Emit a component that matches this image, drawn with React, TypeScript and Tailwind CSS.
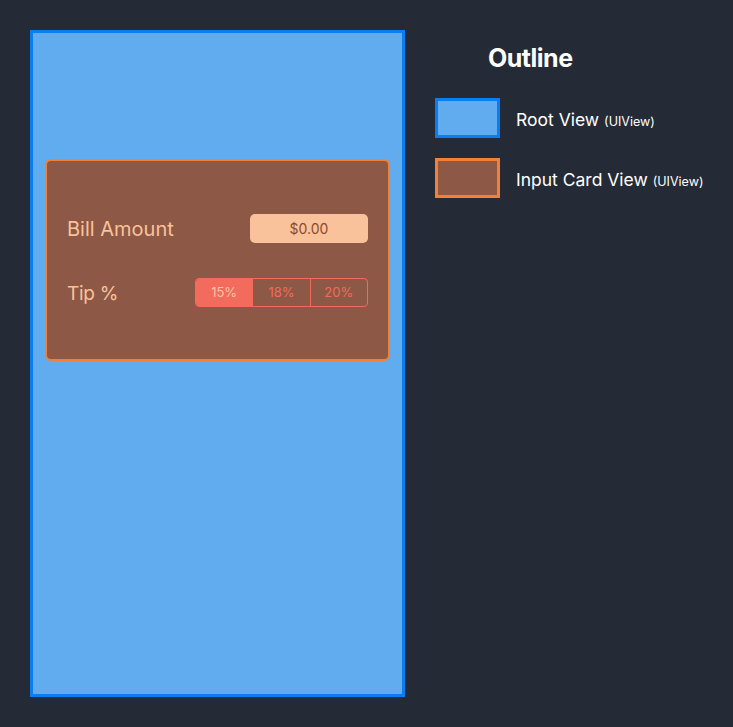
import React from 'react'

const font = { fontFamily: 'Inter, "Open Sans", "Liberation Sans", sans-serif' }

function LegendItem({ swatch, name }: { swatch: string; name: string }) {
  return (
    <div className="flex items-center gap-4">
      <div className={`h-[40px] w-[65px] shrink-0 border-[3px] ${swatch}`} />
      <p className="mt-[5px] whitespace-nowrap text-[17.5px] text-white">
        {name} <span className="text-[12.5px]">(UIView)</span>
      </p>
    </div>
  )
}

export default function App() {
  return (
    <div className="flex min-h-[727px] w-full gap-[30px] bg-[#252b36] p-[30px]" style={font}>
      <div className="h-[667px] w-[375px] shrink-0 border-[3px] border-[#0a7ef0] bg-[#61acef] pt-[126px] pl-[12px]">
        <div className="flex h-[202px] w-[345px] flex-col rounded-[6px] border-2 border-[#f47f35] bg-[#8d5845] pr-[20px] pl-[20px] pt-[53px]">
          <div className="flex h-[29px] items-center justify-between">
            <span className="text-[20px] text-[#f9c29a]">Bill Amount</span>
            <div className="flex h-[29px] w-[118px] items-center justify-center rounded-[5px] bg-[#f9c29a] text-[14px] text-[#8b4a2f]">
              $0.00
            </div>
          </div>
          <div className="mt-[35px] flex h-[29px] items-center justify-between">
            <span className="pt-[3px] text-[19px] tracking-[-0.3px] text-[#f9c29a]">Tip %</span>
            <div className="flex h-[29px] w-[173px] overflow-hidden rounded-[4px] border border-[#f26b5c] text-[13px]">
              <div className="flex flex-1 items-center justify-center bg-[#f26b5c] text-[#fbc3a6]">15%</div>
              <div className="flex flex-1 items-center justify-center border-l border-[#f26b5c] text-[#f26b5c]">18%</div>
              <div className="flex flex-1 items-center justify-center border-l border-[#f26b5c] text-[#f26b5c]">20%</div>
            </div>
          </div>
        </div>
      </div>
      <div className="flex flex-col">
        <h2 className="mt-[10px] ml-[53px] text-[25px] font-bold tracking-[-0.5px] text-white">Outline</h2>
        <div className="mt-[20px] flex flex-col gap-[20px]">
          <LegendItem swatch="border-[#0a7ef0] bg-[#61acef]" name="Root View" />
          <LegendItem swatch="border-[#f47f35] bg-[#8d5845]" name="Input Card View" />
        </div>
      </div>
    </div>
  )
}
